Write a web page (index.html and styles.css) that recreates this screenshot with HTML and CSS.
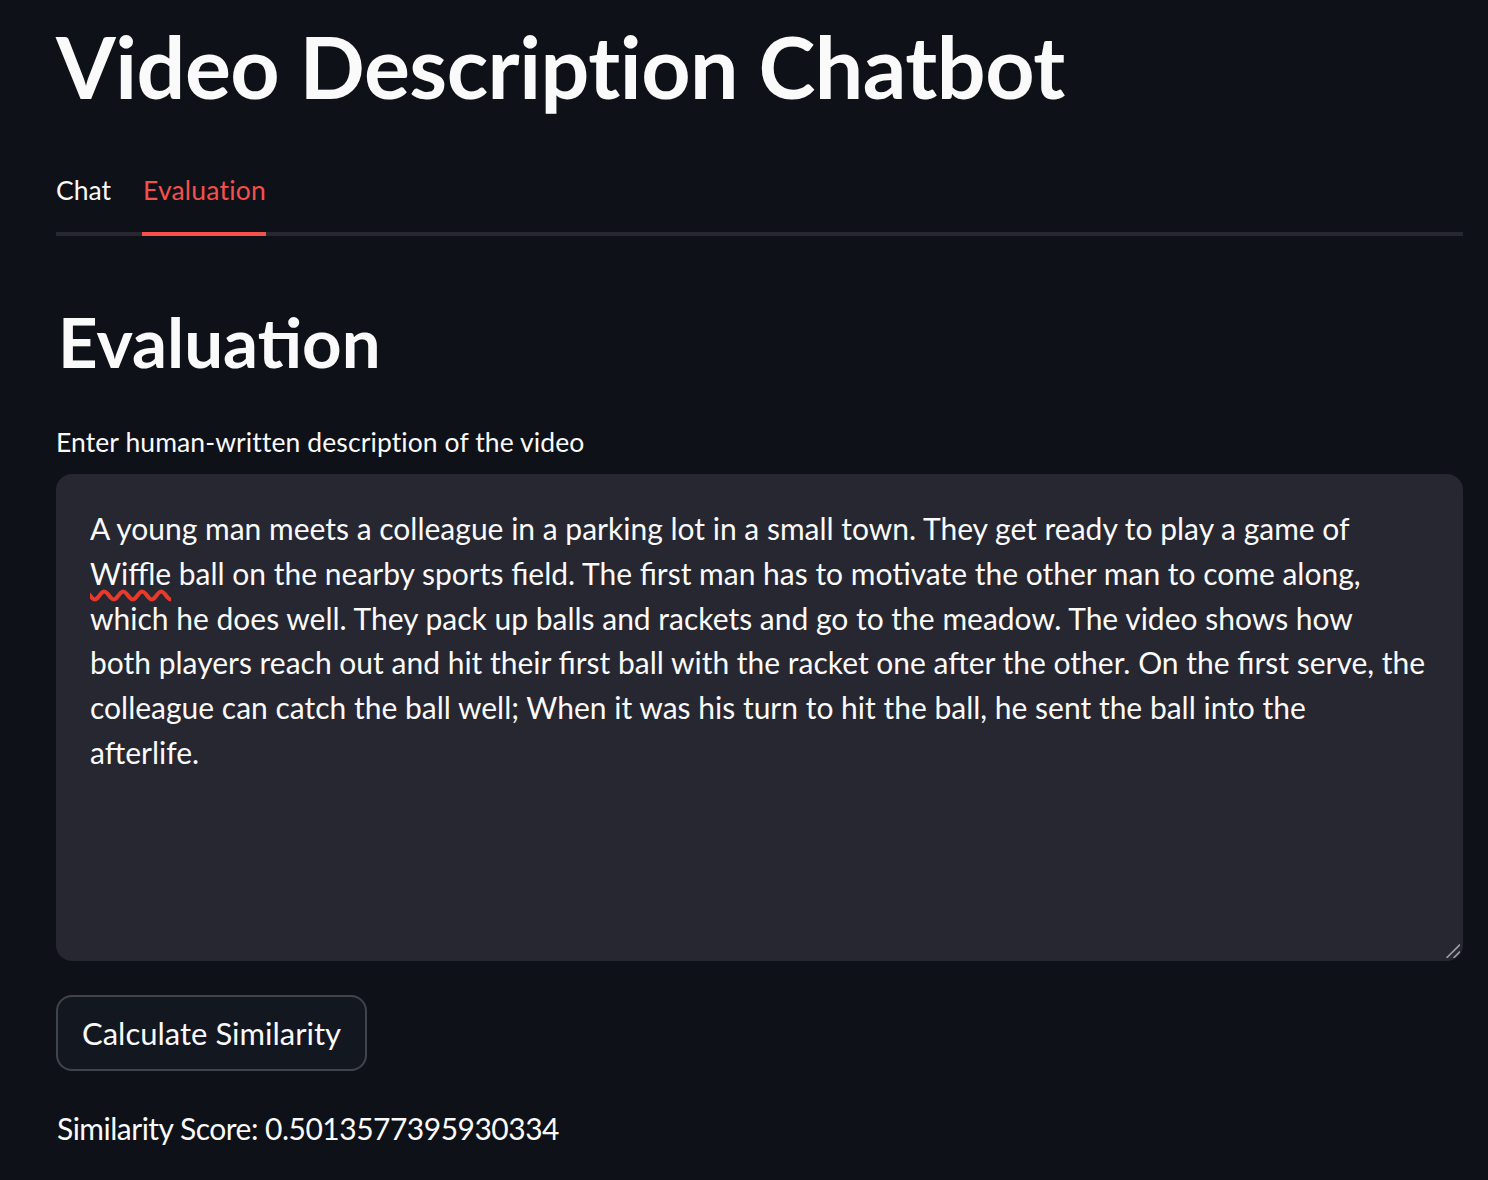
FILE: index.html
```html
<!DOCTYPE html>
<html lang="en">
<head>
<meta charset="utf-8">
<title>Video Description Chatbot</title>
<link rel="stylesheet" href="styles.css">
</head>
<body>
<main class="app">
  <h1 class="title">Video Description Chatbot</h1>

  <nav class="tabs">
    <div class="tab">Chat</div>
    <div class="tab active">Evaluation</div>
  </nav>

  <section class="panel">
    <h2 class="heading">Evaluation</h2>

    <label class="label">Enter human-written description of the video</label>
    <div class="textbox" role="textbox" aria-multiline="true">A young man meets a colleague in a parking lot in a small town. They get ready to play a game of<br><span class="misspelled">Wiffle</span> ball on the nearby sports field. The first man has to motivate the other man to come along,<br>which he does well. They pack up balls and rackets and go to the meadow. The video shows how<br>both players reach out and hit their first ball with the racket one after the other. On the first serve, the<br>colleague can catch the ball well; When it was his turn to hit the ball, he sent the ball into the<br>afterlife.<svg class="resize" viewBox="0 0 14 14" width="14" height="14" aria-hidden="true"><path d="M1 13.5 L13.5 1 M8 13.5 L13.5 8" stroke="#9c9ca3" stroke-width="1.7" stroke-linecap="round" fill="none"/></svg></div>

    <button class="button" type="button">Calculate Similarity</button>

    <p class="score">Similarity Score: 0.5013577395930334</p>
  </section>
</main>
</body>
</html>
```
FILE: styles.css
```css
* { box-sizing: border-box; }

html, body {
  margin: 0;
  padding: 0;
  background: #0e1117;
}

body {
  color: #fafafa;
  font-family: "Lato", "Liberation Sans", sans-serif;
}

.app {
  padding: 14px 25px 0 56px;
  display: flex;
  flex-direction: column;
}

.title {
  margin: 0;
  font-size: 86px;
  font-weight: 700;
  line-height: 104px;
  letter-spacing: -0.5px;
  color: #fafafa;
}

.tabs {
  margin-top: 54px;
  display: flex;
  gap: 32px;
  border-bottom: 4px solid #262730;
}

.tab {
  position: relative;
  font-size: 26.5px;
  line-height: 36px;
  padding-bottom: 24px;
  color: #fafafa;
}

.tab.active {
  color: #f5504b;
  letter-spacing: 0.2px;
}

.tab.active::after {
  content: "";
  position: absolute;
  left: -1px;
  right: 0;
  bottom: -4px;
  height: 4px;
  background: #f5504b;
}

.panel {
  display: flex;
  flex-direction: column;
  align-items: flex-start;
}

.heading {
  margin: 64px 0 0 2px;
  font-size: 69px;
  font-weight: 700;
  line-height: 84px;
  color: #fafafa;
}

.label {
  margin-top: 40px;
  font-size: 26.5px;
  line-height: 36px;
  letter-spacing: 0.1px;
  color: #fafafa;
}

.textbox {
  position: relative;
  align-self: stretch;
  margin-top: 14px;
  height: 487px;
  padding: 32px 20px 0 34px;
  background: #262730;
  border-radius: 16px;
  font-size: 30px;
  line-height: 44.8px;
  white-space: nowrap;
  overflow: hidden;
  color: #fafafa;
}

.misspelled {
  text-decoration: underline wavy #e8392b;
  text-decoration-thickness: 3.5px;
  text-underline-offset: 5px;
}

.resize {
  position: absolute;
  right: 3px;
  bottom: 3px;
}

.button {
  margin-top: 34px;
  height: 76px;
  padding: 0 24px;
  background: #131720;
  border: 2px solid rgba(250, 250, 250, 0.2);
  border-radius: 16px;
  color: #fafafa;
  font-family: "Lato", "Liberation Sans", sans-serif;
  font-size: 31px;
  line-height: 40px;
}

.score {
  margin: 36px 0 0 1px;
  font-size: 30px;
  line-height: 42px;
  letter-spacing: -0.5px;
  color: #fafafa;
}
```
